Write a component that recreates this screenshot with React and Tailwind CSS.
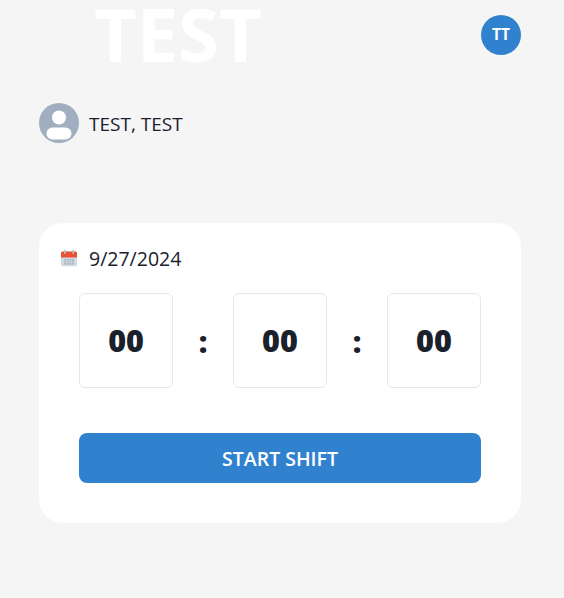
const font = { fontFamily: '"Open Sans", "Noto Sans", sans-serif' };
const heavy = { fontFamily: '"Noto Sans", "Open Sans", sans-serif' };

function TimeBox() {
  return (
    <div
      className="flex h-[95px] w-[94px] items-center justify-center rounded-md border border-[#e2e8f0] bg-white text-[30.5px] font-black text-[#1a202c]"
      style={heavy}
    >
      00
    </div>
  );
}

function Colon() {
  return (
    <span className="translate-y-px text-[30px] font-black text-[#1a202c]" style={heavy}>
      :
    </span>
  );
}

function CalendarIcon() {
  return (
    <svg width="16" height="17" viewBox="0 0 16 17" className="-translate-y-[1.5px]">
      <rect x="0" y="2" width="16" height="15" rx="1.5" fill="#d3dbe2" />
      <path d="M0 8V3.5A1.5 1.5 0 0 1 1.5 2h13A1.5 1.5 0 0 1 16 3.5V8z" fill="#ea5235" />
      <rect x="3" y="0" width="1.5" height="4.5" fill="#b4bfc8" />
      <rect x="11.5" y="0" width="1.5" height="4.5" fill="#b4bfc8" />
      <path d="M3 9.5h10v5.5H3z" fill="#aab5c0" />
      <path d="M3 11.3h10M3 13.2h10M5.5 9.5v5.5M8 9.5v5.5M10.5 9.5v5.5" stroke="#d3dbe2" strokeWidth="0.6" />
    </svg>
  );
}

export default function App() {
  return (
    <div className="h-[598px] w-[564px] overflow-hidden bg-[#f5f5f5]" style={font}>
      <div className="w-[560px] px-[39px]">
        <header className="flex h-[69px] items-center justify-between">
          <h1 className="ml-[55px] -translate-y-px text-[74px] leading-[69px] font-bold text-white">TEST</h1>
          <div className="flex h-10 w-10 items-center justify-center rounded-full bg-[#3182ce] text-[15.5px] font-bold text-white">
            TT
          </div>
        </header>

        <div className="mt-[34px] flex items-center gap-2.5">
          <svg width="40" height="40" viewBox="0 0 40 40">
            <circle cx="20" cy="20" r="20" fill="#a0aec0" />
            <circle cx="20" cy="14.5" r="7" fill="white" />
            <rect x="7.5" y="24.5" width="25" height="12" rx="6" fill="white" />
          </svg>
          <span className="translate-y-px text-[19px] text-[#1a202c]">TEST, TEST</span>
        </div>

        <section className="mt-20 h-[300px] rounded-3xl bg-white px-10 pt-[22px]">
          <div className="-ml-[18px] flex h-7 items-center gap-3">
            <CalendarIcon />
            <span className="text-[19.5px] text-[#1a202c]">9/27/2024</span>
          </div>
          <div className="mt-5 flex items-center justify-between">
            <TimeBox />
            <Colon />
            <TimeBox />
            <Colon />
            <TimeBox />
          </div>
          <button className="mt-[45px] h-[50px] w-full rounded-lg bg-[#3182ce] pt-px text-[19.5px] font-semibold text-white">
            START SHIFT
          </button>
        </section>
      </div>
    </div>
  );
}
